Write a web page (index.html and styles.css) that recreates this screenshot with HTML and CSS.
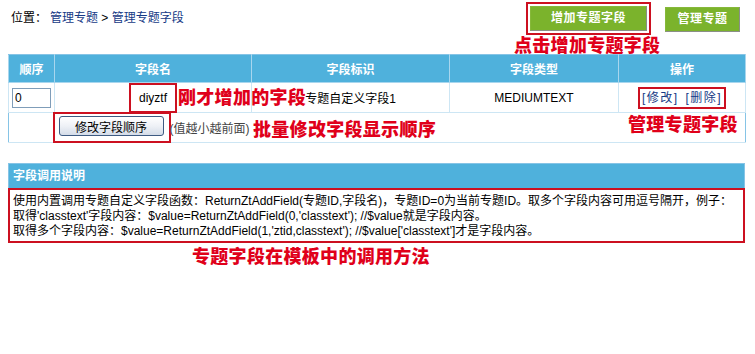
FILE: index.html
```html
<!DOCTYPE html>
<html lang="zh-CN">
<head>
<meta charset="utf-8">
<title>管理专题字段</title>
<link rel="stylesheet" href="styles.css">
</head>
<body>
<div class="page">
  <div class="topbar">
    <div class="crumb">位置：<a href="#">管理专题</a> &gt; <a href="#">管理专题字段</a></div>
    <div class="btns">
      <a class="gbtn gbtn-add mark" href="#">增加专题字段</a>
      <a class="gbtn gbtn-manage" href="#">管理专题</a>
    </div>
  </div>

  <table class="grid">
    <colgroup>
      <col class="c1"><col class="c2"><col class="c3"><col class="c4"><col class="c5">
    </colgroup>
    <thead>
      <tr><th>顺序</th><th>字段名</th><th>字段标识</th><th>字段类型</th><th>操作</th></tr>
    </thead>
    <tbody>
      <tr class="row1">
        <td class="left"><input class="ord" type="text" value="0"></td>
        <td><span class="fname mark">diyztf</span></td>
        <td>专题自定义字段1</td>
        <td>MEDIUMTEXT</td>
        <td><span class="ops mark"><a href="#">[修改]</a> <a href="#">[删除]</a></span></td>
      </tr>
      <tr class="row2">
        <td class="blank"></td>
        <td colspan="4" class="left"><span class="btnwrap mark"><button class="sbtn" type="button">修改字段顺序</button></span><span class="hint">(值越小越前面)</span></td>
      </tr>
    </tbody>
  </table>

  <div class="notebox">
    <div class="notehead">字段调用说明</div>
    <div class="notebody">
      使用内置调用专题自定义字段函数：ReturnZtAddField(专题ID,字段名)，专题ID=0为当前专题ID。取多个字段内容可用逗号隔开，例子：<br>
      取得'classtext'字段内容：$value=ReturnZtAddField(0,'classtext'); //$value就是字段内容。<br>
      取得多个字段内容：$value=ReturnZtAddField(1,'ztid,classtext'); //$value['classtext']才是字段内容。
    </div>
  </div>

  <div class="note n1">点击增加专题字段</div>
  <div class="note n2">刚才增加的字段</div>
  <div class="note n3">批量修改字段显示顺序</div>
  <div class="note n4">管理专题字段</div>
  <div class="note n5">专题字段在模板中的调用方法</div>
</div>
</body>
</html>
```

FILE: styles.css
```css
html, body {
  margin: 0;
  padding: 0;
  background: #ffffff;
}
body {
  font-family: "Liberation Sans", "Noto Sans CJK SC", sans-serif;
  font-size: 12px;
  color: #000;
}
.page {
  position: relative;
  width: 755px;
  height: 354px;
  padding: 0 10px 0 8px;
  box-sizing: border-box;
}
a { color: #000; text-decoration: none; }

.topbar {
  display: flex;
  justify-content: space-between;
  align-items: flex-start;
  height: 54px;
}
.crumb {
  padding: 11px 0 0 3px;
  line-height: 14px;
}
.crumb a { color: #163a86; }
.crumb a:first-child { margin-left: 3px; }
.btns {
  display: flex;
  align-items: flex-start;
  gap: 18px;
  padding: 6px 5px 0 0;
}
.gbtn {
  display: block;
  background: #7bb32c;
  color: #fff;
  font-weight: bold;
  text-align: center;
  line-height: 23px;
  height: 23px;
  border: 1px solid #86b83a;
  border-right-color: #8a8f86;
  border-bottom-color: #8a8f86;
  letter-spacing: 0.5px;
}
.gbtn-add { width: 115px; }
.gbtn-manage { width: 73px; margin-top: 1px; }

.mark {
  outline: 2px solid #cc1020;
}
.gbtn-add.mark { outline-offset: 2px; }

.grid {
  width: 737px;
  border-collapse: collapse;
  table-layout: fixed;
  border: 1px solid #86c4e6;
}
.c1 { width: 46px; }
.c2 { width: 197px; }
.c3 { width: 198px; }
.c4 { width: 169px; }
.c5 { width: 127px; }
.grid th {
  background: #4fb1dc;
  color: #fff;
  font-weight: bold;
  height: 27px;
  border: 1px solid #a8d6ee;
  border-top-color: #86c4e6;
  padding: 0;
}
.grid td {
  height: 29px;
  border: 1px solid #cde6f4;
  text-align: center;
  padding: 0;
}
.grid td.left { text-align: left; padding-left: 3px; }
.ord {
  display: block;
  width: 39px;
  height: 20px;
  box-sizing: border-box;
  border: 1px solid #7f9db9;
  font: 12px "Liberation Sans", sans-serif;
  padding: 0 2px;
  margin: 0;
}
.fname {
  display: inline-block;
  padding: 6px 8px;
  line-height: 14px;
}
.ops {
  display: inline-block;
  padding: 1px 2px;
  line-height: 16px;
  letter-spacing: 1.5px;
  word-spacing: 2px;
}
.ops a { color: #163a86; }

.row2 td { border-left: none; border-right: none; height: 29px; }
.row2 td.blank { border-right: none; }
.row2 td.left { padding-left: 0; }
.btnwrap {
  display: inline-block;
  padding: 2px 5px 5px 4px;
  vertical-align: middle;
}
.sbtn {
  display: block;
  width: 105px;
  height: 20px;
  margin: 0;
  padding: 0;
  font: 12px "Liberation Sans", "Noto Sans CJK SC", sans-serif;
  color: #000;
  border: 1px solid #3e5b82;
  border-radius: 3px;
  background: linear-gradient(#ffffff, #eef1f6 50%, #d4dce8);
}
.hint {
  color: #444;
  vertical-align: middle;
  margin-left: 1px;
}

.notebox {
  margin-top: 20px;
  width: 737px;
  border: 1px solid #86c4e6;
  box-sizing: border-box;
}
.notehead {
  background: #4fb1dc;
  color: #fff;
  font-weight: bold;
  height: 24px;
  line-height: 24px;
  padding-left: 4px;
}
.notebody {
  border: 2px solid #cc1020;
  margin: 0 -1px -1px -1px;
  padding: 4px 0 2px 3px;
  line-height: 15px;
  white-space: nowrap;
}

.note {
  position: absolute;
  font-family: "Noto Sans CJK SC", sans-serif;
  font-weight: 900;
  font-size: 18px;
  line-height: 20px;
  color: #e0001a;
  letter-spacing: 0.3px;
  white-space: nowrap;
}
.n1 { left: 514px; top: 34px; }
.n2 { left: 178px; top: 86px; }
.n3 { left: 253px; top: 118px; }
.n4 { left: 628px; top: 113px; }
.n5 { left: 192px; top: 245px; }
```
